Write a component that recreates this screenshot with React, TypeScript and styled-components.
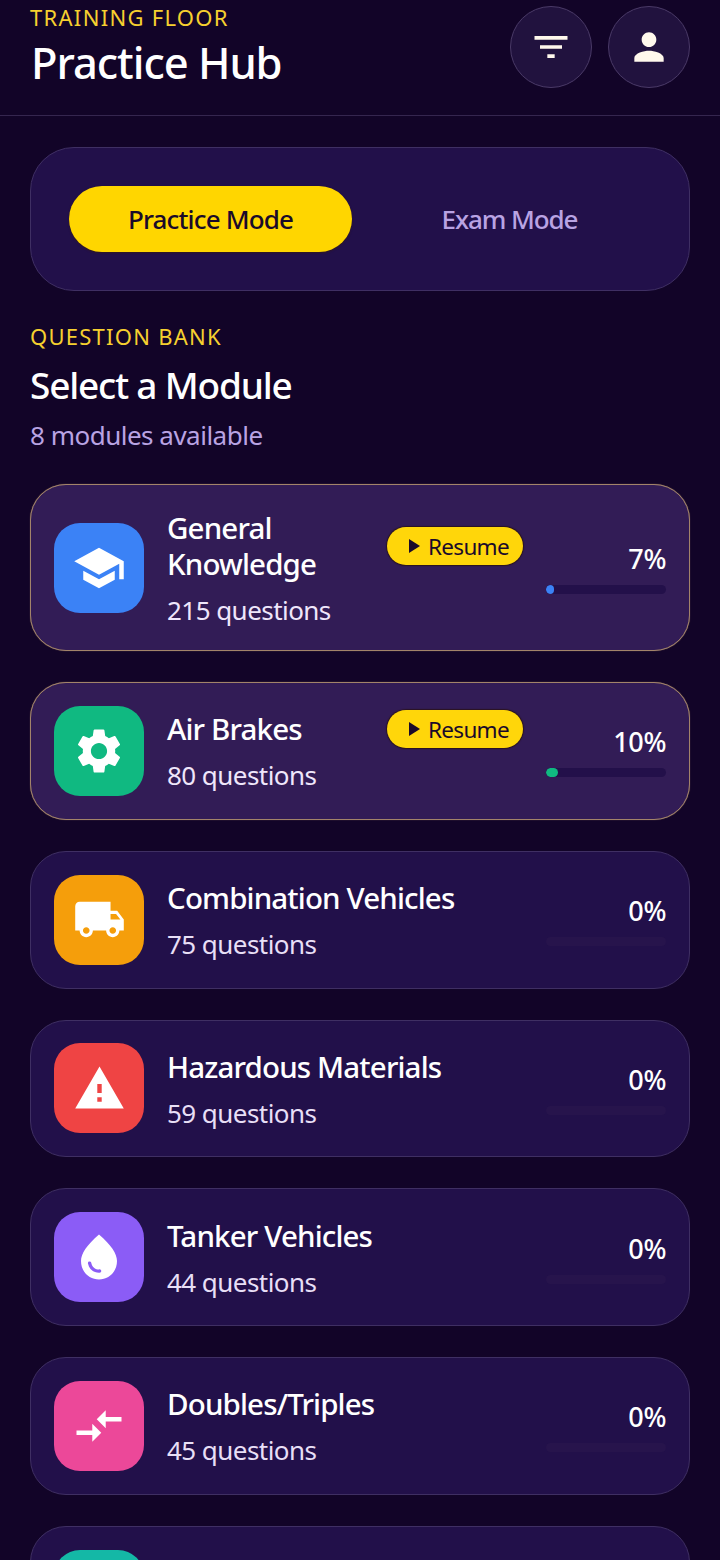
import React from "react";
import styled, { createGlobalStyle } from "styled-components";
import {
  MdSchool,
  MdSettings,
  MdLocalShipping,
  MdWarning,
  MdWaterDrop,
  MdCompareArrows,
  MdFilterList,
  MdPerson,
  MdPlayArrow,
  MdDirectionsBus,
} from "react-icons/md";

const Global = createGlobalStyle`
  html, body { margin: 0; padding: 0; background: #120428; }
  body { font-family: "Noto Sans", "Open Sans", sans-serif; }
  * { box-sizing: border-box; }
`;

const Page = styled.div`
  width: 720px;
  height: 1560px;
  overflow: hidden;
  background: #120428;
  color: #fff;
`;

const Header = styled.header`
  height: 116px;
  padding: 5px 30px 0;
  display: flex;
  justify-content: space-between;
  align-items: flex-start;
  border-bottom: 1.5px solid #35264f;
`;

const TitleBlock = styled.div`
  display: flex;
  flex-direction: column;
`;

const Eyebrow = styled.div`
  font-size: 22px;
  line-height: 24px;
  letter-spacing: 1.3px;
  color: #f6d02f;
  font-weight: 400;
  white-space: nowrap;
`;

const PageTitle = styled.h1`
  margin: 4px 0 0 1px;
  font-size: 43.5px;
  line-height: 58px;
  letter-spacing: -1.05px;
  font-weight: 500;
  color: #fff;
`;

const HeaderActions = styled.div`
  display: flex;
  gap: 16px;
  margin-top: 1px;
`;

const RoundButton = styled.button`
  width: 82px;
  height: 82px;
  padding: 0;
  border-radius: 50%;
  border: 1.5px solid #4a3a67;
  background: #21123e;
  color: #fff8ec;
  display: flex;
  align-items: center;
  justify-content: center;
`;

const Main = styled.main`
  padding: 31px 30px 0;
`;

const ModeCard = styled.div`
  height: 144px;
  padding: 0 38px;
  display: grid;
  grid-template-columns: 283px 283px;
  gap: 16px;
  align-items: center;
  border-radius: 44px;
  background: #22104a;
  border: 1.5px solid #3f2f63;
`;

const ModeButton = styled.button<{ $active?: boolean }>`
  height: 66px;
  border: none;
  border-radius: 33px;
  background: ${(p) => (p.$active ? "#ffd600" : "transparent")};
  color: ${(p) => (p.$active ? "#1a0a2a" : "#b9a3e3")};
  box-shadow: ${(p) => (p.$active ? "0 1px 2px rgba(60,30,0,.6)" : "none")};
  font-family: inherit;
  font-size: 26px;
  font-weight: 500;
  letter-spacing: ${(p) => (p.$active ? "-0.85px" : "-1.1px")};
`;

const SectionLabel = styled.div`
  margin-top: 32px;
  font-size: 22px;
  line-height: 26px;
  letter-spacing: 1.25px;
  color: #f6d02f;
`;

const SectionTitle = styled.h2`
  margin: 14px 0 0;
  font-size: 37px;
  line-height: 44px;
  letter-spacing: -1.2px;
  font-weight: 500;
`;

const SectionSub = styled.div`
  margin-top: 11px;
  font-size: 26px;
  line-height: 34px;
  letter-spacing: -0.5px;
  color: #b9a3e3;
`;

const ModuleList = styled.div`
  margin-top: 32px;
  display: flex;
  flex-direction: column;
  gap: 31px;
`;

const Card = styled.div<{ $active?: boolean }>`
  display: flex;
  align-items: center;
  gap: 23px;
  min-height: 137.75px;
  padding: 22px 23px;
  border-radius: 36px;
  background: ${(p) => (p.$active ? "#321c56" : "#22104a")};
  border: 1px solid ${(p) => (p.$active ? "#a3846a" : "#3f2f63")};
  box-shadow: ${(p) => (p.$active ? "0 0 1px #927561" : "none")};
`;

const IconTile = styled.div<{ $bg: string }>`
  flex: none;
  width: 90px;
  height: 90px;
  border-radius: 26px;
  background: ${(p) => p.$bg};
  color: #fff;
  display: flex;
  align-items: center;
  justify-content: center;
`;

const ModuleText = styled.div`
  flex: 1;
  min-width: 0;
  padding-top: 3px;
`;

const ModuleName = styled.div`
  font-size: 29.5px;
  line-height: 36px;
  letter-spacing: -0.85px;
  font-weight: 500;
  color: #fff;
`;

const ModuleCount = styled.div<{ $active?: boolean }>`
  margin-top: 10px;
  font-size: 26px;
  line-height: 36px;
  letter-spacing: -0.55px;
  color: ${(p) => (p.$active ? "#efe6fb" : "#e8dff6")};
`;

const ResumeBadge = styled.div`
  flex: none;
  width: 136px;
  height: 38px;
  margin-bottom: 43px;
  border-radius: 19px;
  background: #ffd60a;
  color: #1a0a2a;
  display: flex;
  align-items: center;
  justify-content: center;
  gap: 3px;
  font-size: 22.5px;
  letter-spacing: -0.7px;
  box-shadow: 0 0 1px 1px rgba(40, 15, 10, 0.7);
`;

const Progress = styled.div`
  flex: none;
  width: 120px;
  padding-top: 1px;
  display: flex;
  flex-direction: column;
  align-items: flex-end;
  gap: 9px;
`;

const Percent = styled.div`
  font-size: 27px;
  line-height: 34px;
  letter-spacing: -0.4px;
  font-weight: 500;
`;

const Track = styled.div<{ $active?: boolean }>`
  width: 100%;
  height: 9px;
  border-radius: 5px;
  overflow: hidden;
  background: ${(p) => (p.$active ? "#23104a" : "#27144c")};
`;

const Fill = styled.div<{ $color: string }>`
  height: 100%;
  border-radius: 5px;
  background: ${(p) => p.$color};
`;

type Module = {
  name: string;
  count: number;
  pct: number;
  color: string;
  icon: React.ReactNode;
};

const modules: Module[] = [
  { name: "General Knowledge", count: 215, pct: 7, color: "#3b82f6", icon: <MdSchool size={54} /> },
  { name: "Air Brakes", count: 80, pct: 10, color: "#10b981", icon: <MdSettings size={54} /> },
  { name: "Combination Vehicles", count: 75, pct: 0, color: "#f59e0b", icon: <MdLocalShipping size={53} /> },
  { name: "Hazardous Materials", count: 59, pct: 0, color: "#ef4444", icon: <MdWarning size={53} /> },
  { name: "Tanker Vehicles", count: 44, pct: 0, color: "#8b5cf6", icon: <MdWaterDrop size={54} /> },
  { name: "Doubles/Triples", count: 45, pct: 0, color: "#ec4899", icon: <MdCompareArrows size={54} /> },
];

export default function App() {
  return (
    <Page>
      <Global />
      <Header>
        <TitleBlock>
          <Eyebrow>TRAINING FLOOR</Eyebrow>
          <PageTitle>Practice Hub</PageTitle>
        </TitleBlock>
        <HeaderActions>
          <RoundButton aria-label="Filter">
            <MdFilterList size={44} />
          </RoundButton>
          <RoundButton aria-label="Profile">
            <MdPerson size={44} />
          </RoundButton>
        </HeaderActions>
      </Header>
      <Main>
        <ModeCard>
          <ModeButton $active>Practice Mode</ModeButton>
          <ModeButton>Exam Mode</ModeButton>
        </ModeCard>
        <SectionLabel>QUESTION BANK</SectionLabel>
        <SectionTitle>Select a Module</SectionTitle>
        <SectionSub>8 modules available</SectionSub>
        <ModuleList>
          {modules.map((m) => {
            const active = m.pct > 0;
            return (
              <Card key={m.name} $active={active}>
                <IconTile $bg={m.color}>{m.icon}</IconTile>
                <ModuleText>
                  <ModuleName>{m.name}</ModuleName>
                  <ModuleCount $active={active}>{m.count} questions</ModuleCount>
                </ModuleText>
                {active && (
                  <ResumeBadge>
                    <MdPlayArrow size={24} />
                    Resume
                  </ResumeBadge>
                )}
                <Progress>
                  <Percent>{m.pct}%</Percent>
                  <Track $active={active}>
                    <Fill $color={m.color} style={{ width: `${m.pct}%` }} />
                  </Track>
                </Progress>
              </Card>
            );
          })}
          <Card>
            <IconTile $bg="#14b8a6">
              <MdDirectionsBus size={54} />
            </IconTile>
          </Card>
        </ModuleList>
      </Main>
    </Page>
  );
}
